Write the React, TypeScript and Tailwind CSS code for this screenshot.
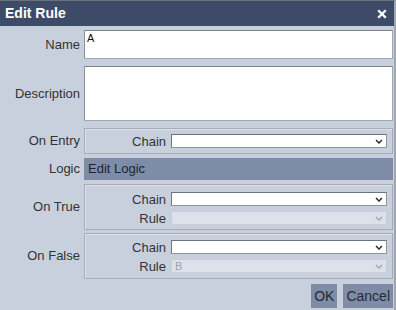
function Chevron({ disabled }: { disabled?: boolean }) {
  return (
    <svg width="8" height="5" viewBox="0 0 8 5" className="shrink-0">
      <path d="M1 1 L4 4 L7 1" fill="none" stroke={disabled ? "#a3a8b0" : "#222"} strokeWidth="1.4" />
    </svg>
  );
}

function Select({ value, disabled }: { value?: string; disabled?: boolean }) {
  return (
    <div
      className={
        disabled
          ? "flex-1 h-[14px] flex items-center justify-between pl-[3px] pr-[3px] bg-[#dde2ea] border border-[#c9ced6] rounded-[1px] text-[11px] text-[#9ba1aa]"
          : "flex-1 h-[14px] flex items-center justify-between pl-[3px] pr-[3px] bg-white border border-[#8f949c] border-l-[#6f737a] border-t-[#6f737a] rounded-[1px] text-[11px] text-[#222]"
      }
    >
      <span className="leading-none">{value}</span>
      <Chevron disabled={disabled} />
    </div>
  );
}

function Field({ label, value, disabled }: { label: string; value?: string; disabled?: boolean }) {
  return (
    <div className="flex items-center">
      <div className="w-[86px] text-right pr-[5px] text-[13px] leading-none text-[#333]">{label}</div>
      <Select value={value} disabled={disabled} />
    </div>
  );
}

function Row({ label, children, h }: { label: string; children: React.ReactNode; h: string }) {
  return (
    <div className={`flex ${h}`}>
      <div className="w-[84px] shrink-0 flex items-center justify-end pr-[4px] text-[13px] text-[#333]">{label}</div>
      <div className="flex-1 flex flex-col">{children}</div>
    </div>
  );
}

export default function App() {
  return (
    <div className="w-[396px] h-[310px] bg-[#c8d0dd] border-t border-t-[#6b7079] border-r-2 border-r-[#a0a6b0] flex flex-col font-['Liberation_Sans',Arial,sans-serif]">
      <div className="h-[25px] shrink-0 bg-[#3e4b68] flex items-center justify-between pl-[5px] pr-[7px] text-white font-bold text-[14px]">
        <span>Edit Rule</span>
        <svg width="10" height="10" viewBox="0 0 10 10">
          <path d="M1.2 1.2 L8.8 8.8 M8.8 1.2 L1.2 8.8" stroke="#fff" strokeWidth="2.3" />
        </svg>
      </div>

      <div className="flex flex-col pr-[1px]">
        <div className="mt-[4px]">
          <Row label="Name" h="h-[29px]">
            <div className="h-full bg-white border border-[#a2a6ad] border-t-[#7e828a] border-l-[#8d9199] rounded-[1px] pl-[2px] pt-[1px] text-[11px] text-[#111] leading-tight">
              A
            </div>
          </Row>
        </div>

        <div className="mt-[7px]">
          <Row label="Description" h="h-[55px]">
            <div className="h-full bg-white border border-[#a2a6ad] border-t-[#7e828a] border-l-[#8d9199] rounded-[1px]" />
          </Row>
        </div>

        <div className="mt-[7px]">
          <Row label="On Entry" h="h-[26px]">
            <div className="h-full border border-[#a6adb9] shadow-[inset_1px_1px_0_#dde2ea] pr-[5px] flex flex-col justify-center">
              <Field label="Chain" />
            </div>
          </Row>
        </div>

        <div className="mt-[4px]">
          <Row label="Logic" h="h-[22px]">
            <div className="h-full bg-[#7f8ca7] flex items-center pl-[4px] text-[13px] text-[#1f2430]">Edit Logic</div>
          </Row>
        </div>

        <div className="mt-[4px]">
          <Row label="On True" h="h-[46px]">
            <div className="h-full border border-[#a6adb9] shadow-[inset_1px_1px_0_#dde2ea] pr-[5px] pt-[7px] flex flex-col gap-[5px]">
              <Field label="Chain" />
              <Field label="Rule" disabled />
            </div>
          </Row>
        </div>

        <div className="mt-[3px]">
          <Row label="On False" h="h-[46px]">
            <div className="h-full border border-[#a6adb9] shadow-[inset_1px_1px_0_#dde2ea] pr-[5px] pt-[6px] flex flex-col gap-[5px]">
              <Field label="Chain" />
              <Field label="Rule" value="B" disabled />
            </div>
          </Row>
        </div>

        <div className="mt-[5px] flex justify-end gap-[6px]">
          <button className="h-[24px] px-[3px] bg-[#7f8ca7] text-[14px] text-[#252a35]">OK</button>
          <button className="h-[24px] px-[3px] bg-[#7f8ca7] text-[14px] text-[#252a35]">Cancel</button>
        </div>
      </div>
    </div>
  );
}
